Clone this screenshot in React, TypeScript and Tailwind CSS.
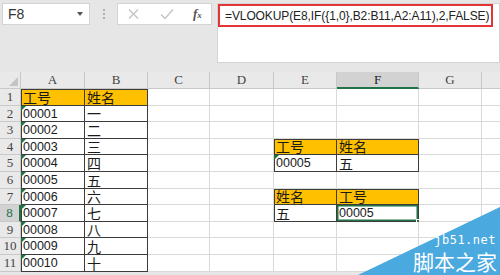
import React from 'react'

const COLS = [
  { key: 'A', w: 64 },
  { key: 'B', w: 63 },
  { key: 'C', w: 62 },
  { key: 'D', w: 64 },
  { key: 'E', w: 63 },
  { key: 'F', w: 82 },
  { key: 'G', w: 63 },
  { key: 'H', w: 64 },
]

type CellData = { text: string; fill?: boolean; flag?: boolean }

// sheet content keyed as "A1"
const cells: Record<string, CellData> = {
  A1: { text: '工号', fill: true },
  B1: { text: '姓名', fill: true },
  E4: { text: '工号', fill: true },
  F4: { text: '姓名', fill: true },
  E5: { text: '00005', flag: true },
  F5: { text: '五' },
  E7: { text: '姓名', fill: true },
  F7: { text: '工号', fill: true },
  E8: { text: '五' },
  F8: { text: '00005' },
}
const names = ['一', '二', '三', '四', '五', '六', '七', '八', '九', '十']
names.forEach((n, i) => {
  cells[`A${i + 2}`] = { text: `0000${i + 1}`.slice(-5), flag: true }
  cells[`B${i + 2}`] = { text: n }
})

// bordered ranges: A1:B11, E4:F5, E7:F8
function inTable(c: string, r: number) {
  if ((c === 'A' || c === 'B') && r >= 1 && r <= 11) return true
  if ((c === 'E' || c === 'F') && ((r >= 4 && r <= 5) || (r >= 7 && r <= 8))) return true
  return false
}

const SELECTED = { col: 'F', row: 8 }

function Cell({ col, row }: { col: string; row: number }) {
  const data = cells[`${col}${row}`]
  const table = inTable(col, row)
  const top = table && !inTable(col, row - 1)
  const left = table && (col === 'A' || col === 'E')
  const selected = col === SELECTED.col && row === SELECTED.row
  let shadow = ''
  if (top && left) shadow = 'shadow-[inset_1px_1px_0_#3c3c3c]'
  else if (top) shadow = 'shadow-[inset_0_1px_0_#3c3c3c]'
  else if (left) shadow = 'shadow-[inset_1px_0_0_#3c3c3c]'
  if (selected) shadow = 'shadow-[inset_0_0_0_1.5px_#217346]'
  const isDigits = data && /^\d+$/.test(data.text)
  return (
    <div
      className={`relative flex items-end overflow-visible border-r border-b pl-[2px] ${
        table ? 'border-[#3c3c3c]' : 'border-[#dadada]'
      } ${data?.fill ? 'bg-[#ffc000]' : 'bg-white'} ${shadow}`}
    >
      {data && (
        <span
          className={`whitespace-nowrap leading-none text-[#1a1a1a] ${
            isDigits ? 'pb-[1px] text-[12.5px]' : 'text-[14px]'
          }`}
        >
          {data.text}
        </span>
      )}
      {data?.flag && (
        <span className="absolute top-0 left-0 h-0 w-0 border-t-[5px] border-r-[5px] border-t-[#217346] border-r-transparent" />
      )}
      {selected && (
        <span className="absolute -right-[3px] -bottom-[3px] h-[5px] w-[5px] border border-white bg-[#217346]" />
      )}
    </div>
  )
}

export default function App() {
  const rows = Array.from({ length: 11 }, (_, i) => i + 1)
  return (
    <div
      className="relative h-[275px] w-[500px] overflow-hidden bg-[#e6e6e6]"
      style={{ fontFamily: '"Liberation Sans", "Noto Sans CJK SC", sans-serif' }}
    >
      {/* formula bar */}
      <div className="flex h-[72px] items-start pt-[3px] pl-[2px]">
        <div className="flex h-[22px] w-[88px] items-center justify-between border border-[#d4d4d4] bg-white pr-[6px] pl-[5px]">
          <span className="text-[14px] text-[#333]">F8</span>
          <span className="h-0 w-0 border-x-[3.5px] border-t-[4px] border-x-transparent border-t-[#555]" />
        </div>
        <div className="flex h-[22px] w-[27px] flex-col items-center justify-center gap-[2px]">
          <span className="h-[2px] w-[2px] bg-[#b0b0b0]" />
          <span className="h-[2px] w-[2px] bg-[#b0b0b0]" />
          <span className="h-[2px] w-[2px] bg-[#b0b0b0]" />
        </div>
        <div className="flex h-[22px] w-[95px] items-center border border-[#d4d4d4] bg-white">
          <svg width="72" height="20" viewBox="0 0 72 20">
            <path d="M11 5.5 L20 14.5 M20 5.5 L11 14.5" stroke="#c4c4c4" strokeWidth="1.4" fill="none" />
            <path d="M43 10.5 L47 14.5 L55 5.5" stroke="#c4c4c4" strokeWidth="1.4" fill="none" />
          </svg>
          <span
            className="ml-[3px] flex items-baseline text-[13px] font-bold text-[#555] italic"
            style={{ fontFamily: '"Liberation Serif", serif' }}
          >
            f<span className="text-[9px]">x</span>
          </span>
        </div>
        <div className="ml-[5px] h-[60px] flex-1 border border-[#d4d4d4] bg-white">
          <div className="flex h-[23px] w-[275px] items-center border-2 border-[#e23636] pl-[5px]">
            <span className="text-[12px] tracking-[-0.1px] whitespace-nowrap text-[#222]">
              =VLOOKUP(E8,IF({'{'}1,0{'}'},B2:B11,A2:A11),2,FALSE)
            </span>
          </div>
        </div>
      </div>

      {/* sheet grid */}
      <div
        className="grid bg-white"
        style={{
          gridTemplateColumns: `21px ${COLS.map((c) => `${c.w}px`).join(' ')}`,
          gridTemplateRows: `17px repeat(11, 16.6px)`,
        }}
      >
        <div className="flex items-end justify-end border-r border-b border-[#c8c8c8] bg-[#e9e9e9] pr-[2px] pb-[2px]">
          <span className="h-0 w-0 border-b-[9px] border-l-[9px] border-b-[#c4c4c4] border-l-transparent" />
        </div>
        {COLS.map((c) => (
          <div
            key={c.key}
            className={`flex items-center justify-center border-r border-[#c8c8c8] text-[13px] ${
              c.key === SELECTED.col
                ? 'border-b-2 border-b-[#217346] bg-[#d2d2d2] text-[#222]'
                : 'border-b bg-[#e9e9e9] text-[#444]'
            }`}
            style={{ fontFamily: '"Liberation Serif", serif' }}
          >
            {/* H sits mostly off-screen, its letter is not visible */}
            {c.key === 'H' ? '' : c.key}
          </div>
        ))}
        {rows.map((r) => (
          <React.Fragment key={r}>
            <div
              className={`flex items-center justify-center border-b border-[#c8c8c8] text-[13px] ${
                r === SELECTED.row
                  ? 'border-r-2 border-r-[#217346] bg-[#d2d2d2] text-[#217346]'
                  : 'border-r bg-[#e9e9e9] text-[#444]'
              }`}
              style={{ fontFamily: '"Liberation Serif", serif' }}
            >
              {r}
            </div>
            {COLS.map((c) => (
              <Cell key={c.key} col={c.key} row={r} />
            ))}
          </React.Fragment>
        ))}
      </div>

      {/* watermark */}
      <svg className="absolute right-0 bottom-0" width="142" height="68" viewBox="0 0 142 68">
        <polygon points="0,68 142,0 142,68" fill="#4aa9df" />
      </svg>
      <div
        className="absolute right-[4px] bottom-[29px] text-[12px] leading-none tracking-[0.5px] text-white"
        style={{ fontFamily: '"DejaVu Sans Mono", monospace' }}
      >
        jb51.net
      </div>
      <div
        className="absolute right-[3px] bottom-[3px] text-[21px] leading-none text-white"
        style={{ fontFamily: '"Noto Sans CJK SC", sans-serif' }}
      >
        脚本之家
      </div>
    </div>
  )
}
